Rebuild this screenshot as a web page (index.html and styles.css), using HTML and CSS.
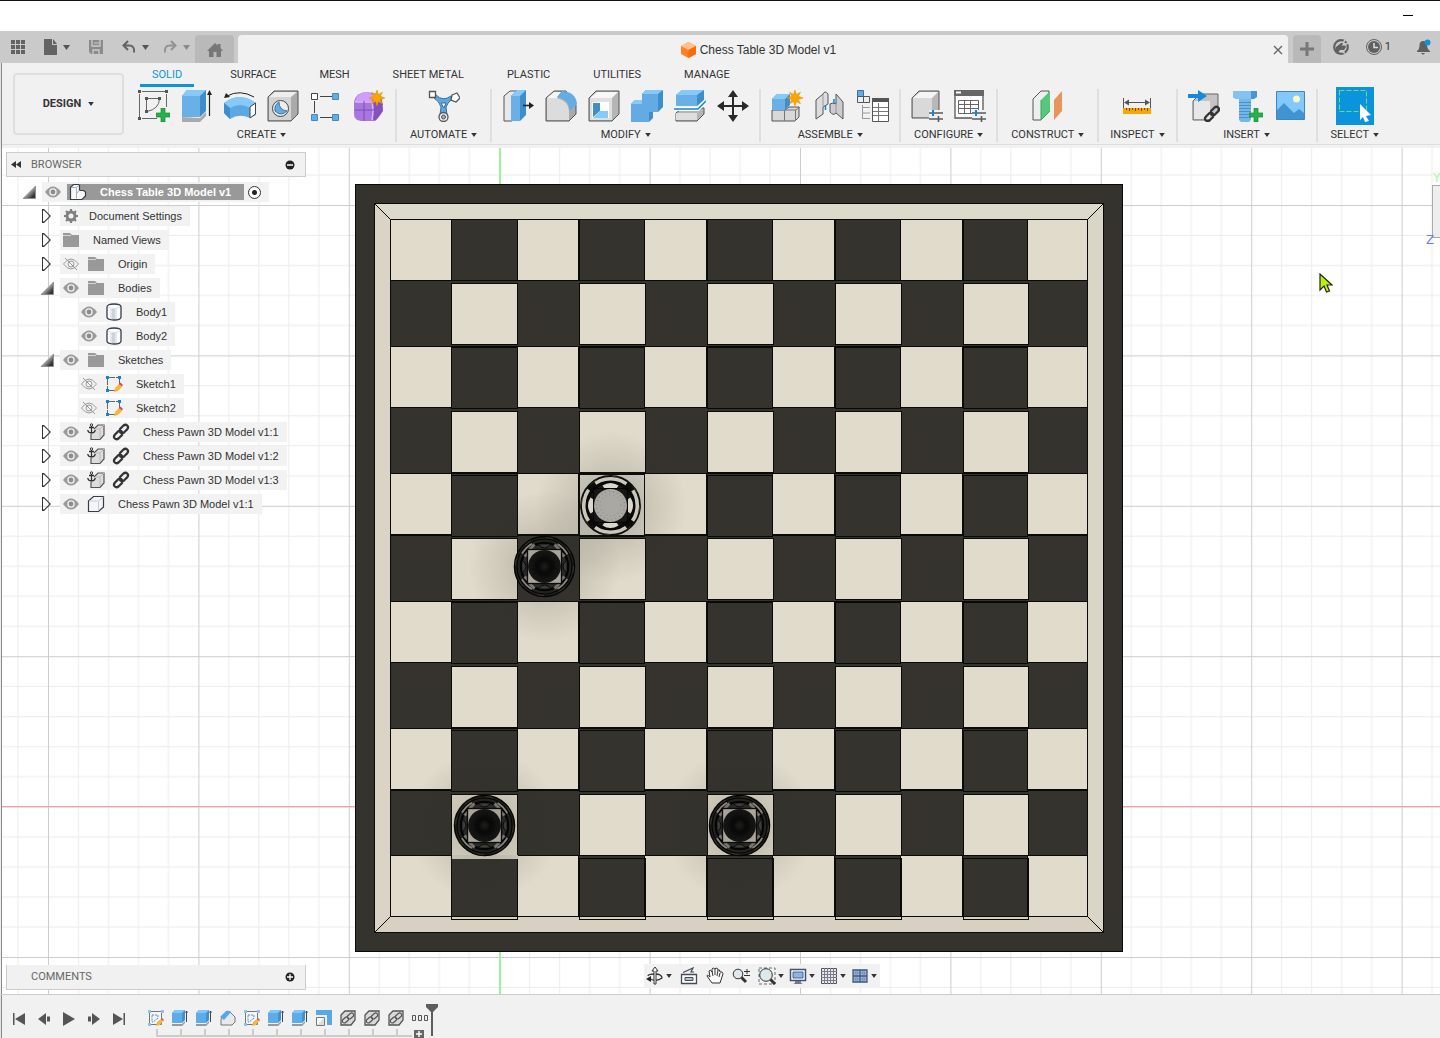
FILE: index.html
```html
<!DOCTYPE html>
<html lang="en">
<head>
<meta charset="utf-8">
<title>Chess Table 3D Model v1</title>
<link rel="stylesheet" href="styles.css">
</head>
<body>
<svg class="defs" aria-hidden="true">
  <defs>
    <symbol id="caret" viewBox="0 0 7 5"><path d="M0 0h7L3.500 5z" fill="currentColor"/></symbol>
    <symbol id="plus" viewBox="0 0 14 14"><path d="M5 0h4v5h5v4H9v5H5V9H0V5h5z" fill="#27b04b" stroke="#118d35" stroke-width=".7"/></symbol>
    <symbol id="star" viewBox="0 0 16 16"><path d="M8 0l1.500 4.500 4-2.300-2.200 4L16 8l-4.700 1.600 2.200 4.200-4-2.200L8 16l-1.500-4.400-4 2.200 2.200-4.200L0 8l4.700-1.800-2.200-4 4 2.300z" fill="#f9a602" stroke="#df8b00" stroke-width=".5"/></symbol>
    <symbol id="chain" viewBox="0 0 18 18"><g fill="none" stroke="currentColor" stroke-width="2.300" stroke-linecap="round"><path d="M8 6l3.500-3.500q2-1.500 3.700 0t0 3.700L12 9.500q-2 1.500-3.700 0"/><path d="M10 12l-3.500 3.500q-2 1.500-3.700 0t0-3.700L6 8.500q2-1.500 3.700 0"/></g></symbol>
    <symbol id="sliders" viewBox="0 0 14 12"><g stroke="#5b5b5b" stroke-width="1.600"><path d="M0 3h14M0 9h14M9.500 6v6"/></g><path d="M4 0v6" stroke="#0b87dc" stroke-width="2"/></symbol>
    <symbol id="eye" viewBox="0 0 16 12"><path d="M0 6q8-11 16 0-8 11-16 0z" fill="#9a9a9a"/><circle cx="8" cy="6" r="3.700" fill="#f2f2f2"/><circle cx="8" cy="6" r="2.400" fill="#8c8c8c"/></symbol>
    <symbol id="eye-off" viewBox="0 0 16 12"><g fill="none" stroke="#9a9a9a"><path d="M.5 6q7.500-10 15 0-7.500 10-15 0z"/><circle cx="8" cy="6" r="3"/><path d="M2 0l12 12"/></g></symbol>
    <symbol id="folder" viewBox="0 0 18 14"><path d="M1 0h7l2 2h7v12H1z" fill="#999"/><path d="M1 2.500h8" stroke="#d5d5d5"/></symbol>
    <symbol id="gear" viewBox="0 0 18 16"><circle cx="9" cy="8" r="4" fill="none" stroke="#808080" stroke-width="3"/><path d="M9 1v14M2 8h14M4 3l10 10M14 3L4 13" stroke="#808080" stroke-width="2.200"/><circle cx="9" cy="8" r="2.500" fill="#f2f2f2"/></symbol>
    <symbol id="cylinder" viewBox="0 0 18 18"><path d="M2 4q0-3 7-3t7 3v10q0 3-7 3t-7-3z" fill="#fff" stroke="#343d4c" stroke-width="1.300"/><path d="M5 6h7v10H5z" fill="#e3e7ec"/><path d="M7 6h3v10H7z" fill="#ccd3dc"/><path d="M3 4.500q6 2 12 0" fill="none" stroke="#d9dde3"/></symbol>
    <symbol id="sketch" viewBox="0 0 18 18"><path d="M3 2.500h11M2.500 3v12M14.500 3v7M3 15.500h7" fill="none" stroke="#666" stroke-dasharray="7 1"/><path d="M1 1h3v3H1zM13 1h3v3h-3zM1 14h3v3H1z" fill="#0b87dc"/><path d="M9 17l1-4 4-4 3 3-4 4z" fill="#f6b83c"/><path d="M14 9l1.500-1.500 2.500 2.500-1.300 1.500z" fill="#e94442"/></symbol>
    <symbol id="part" viewBox="0 0 18 18"><path d="M1.500 6l5-4.500h10V12l-5 4.500h-10z" fill="#f4f5f7" stroke="#343d4c" stroke-width="1.200"/><path d="M2 6h9.500v10M11.500 6l5-4" fill="none" stroke="#c8ccd2"/></symbol>
    <symbol id="anchored" viewBox="0 0 18 18"><path d="M7 6l4-4h6v10l-4 4.500H4V11" fill="#ddd" stroke="#555" stroke-width="1.200"/><path d="M8 6h5v9M13 6l4-4" fill="none" stroke="#bbb"/><path d="M4.500 3v7M2 4.500h5M.7 7q.5 3 3.800 3t3.800-3" fill="none" stroke="#333" stroke-width="1.300"/><circle cx="4.500" cy="2" r="1.200" fill="none" stroke="#333"/></symbol>
    <symbol id="assembly" viewBox="0 0 18 18"><path d="M1.500 4.500l3-3h6v6h4l2 1.500v4l-3.500 3.500H1.500z" fill="#f8f8f9" stroke="#343d4c" stroke-width="1.200"/><path d="M7.500 4.500v11M2 4.500h5.500l3-3M7.500 10.500l3-3" fill="none" stroke="#aab0ba"/></symbol>

    <symbol id="tl-sketch" viewBox="0 0 16 16"><path d="M1.500 1.500h12v13h-12z" fill="#f6f6f6" stroke="#777"/><path d="M4 5h6v3l-5 4H4z" fill="none" stroke="#3c94dc" stroke-dasharray="2 1"/><path d="M0 0h3v3H0zM13 0h3v3h-3zM0 13h3v3H0z" fill="#8fc3ee"/><path d="M8 16l1-4 4-3 2 2-3 4z" fill="#f6b83c"/><path d="M13 9l1-1 2 2-1 1z" fill="#e94442"/></symbol>
    <symbol id="tl-extrude" viewBox="0 0 16 16"><path d="M0 3l3-3h10v10l-3 3H0z" fill="#3f93d4"/><path d="M0 3h10v10H0z" fill="#5cabea"/><path d="M0 3l3-3h10l-3 3z" fill="#82c5f7"/><path d="M0 14h10l3-3v2l-3 3H0z" fill="#999"/><path d="M14.500 1v11M13.500 2.500l1-1.500 1 1.500" stroke="#444" fill="none"/></symbol>
    <symbol id="tl-fillet" viewBox="0 0 16 16"><path d="M1 9l8-8 6 6v5l-3 3H1z" fill="#e9e9e9" stroke="#777"/><path d="M0 7l6-6q4-1 5 1l-7 8z" fill="#56a9e8"/></symbol>
    <symbol id="tl-move" viewBox="0 0 16 16"><path d="M0 0h16v15h-5V5H0z" fill="#56a9e8"/><path d="M.5 7.500h8v8h-8z" fill="#fff" stroke="#777"/><path d="M1 15L8 8v7z" fill="#ddd"/></symbol>
    <symbol id="tl-link" viewBox="0 0 16 16"><path d="M1 5l4-4h10v9l-4 5H1z" fill="#d9d9d9" stroke="#555" stroke-width="1.300"/><g fill="none" stroke="#555" stroke-width="1.200"><rect x="2" y="8" width="7" height="4" rx="2" transform="rotate(-42 5.500 10)"/><rect x="7" y="4" width="7" height="4" rx="2" transform="rotate(-42 10.500 6)"/></g></symbol>

    <pattern id="grid" x="48" y="57" width="150.400" height="150.400" patternUnits="userSpaceOnUse">
      <path d="M30.500 0v151M60.500 0v151M90.500 0v151M120.500 0v151M0 30.500h151M0 60.500h151M0 90.500h151M0 120.500h151" stroke="#ececec"/>
      <path d="M.5 0v151M0 .5h151" stroke="#cdcdcd"/>
    </pattern>
    <radialGradient id="shade"><stop offset=".35" stop-color="#23271b" stop-opacity=".15"/><stop offset="1" stop-color="#23271b" stop-opacity="0"/></radialGradient>
    <radialGradient id="head"><stop offset="0" stop-color="#1e1e1c"/><stop offset=".4" stop-color="#080808"/><stop offset="1" stop-color="#171716"/></radialGradient>

    <g id="pawn-dark">
      <circle r="30" fill="#22221f" stroke="#050505" stroke-width="1.500"/>
      <circle r="29" fill="none" stroke="#5c4c26" stroke-width=".6" stroke-dasharray="7 16"/>
      <circle r="26" fill="none" stroke="#85837c" stroke-width="2.400" stroke-dasharray="14 26.840" stroke-dashoffset="-13"/>
      <circle r="27.500" fill="none" stroke="#050505" stroke-width="1.200"/>
      <circle r="23.500" fill="#292a27" stroke="#050505" stroke-width="2.500"/>
      <path d="M-15-17l5-5M15-17l-5-5M-15 17l5 5M15 17l-5 5M-20-10l5-5M20-10l-5-5M-20 10l5 5M20 10l-5 5" stroke="#77756e" stroke-width="3"/>
      <path d="M-6-22Q0-15 6-22M-6 22Q0 15 6 22M-22-6Q-15 0-22 6M22-6Q15 0 22 6" fill="#3c3d39" stroke="#080808"/>
      <rect x="-17" y="-17" width="34" height="34" fill="#aaa49b" stroke="#0b0b0a" stroke-width="1.300"/>
      <circle r="16.500" fill="url(#head)"/><circle r="12" fill="none" stroke="#1b1b19" stroke-width="1.500" stroke-dasharray="1 3"/>
    </g>
    <g id="pawn-light">
      <circle r="29.500" fill="#c9c7bc" stroke="#0c0c0a" stroke-width="1.800"/><circle r="29" fill="none" stroke="#665326" stroke-width=".7" stroke-dasharray="7 16"/>
      <circle r="26.500" fill="none" stroke="#0c0c0a" stroke-width="5" stroke-dasharray="9 32.600" stroke-dashoffset="-16"/>
      <circle r="23.500" fill="#171714" stroke="#080808" stroke-width="3"/>
      <path d="M-8-20Q0-25 8-20L6-17Q0-18-6-17zM-8 20Q0 25 8 20L6 17Q0 18-6 17zM-20-8Q-25 0-20 8L-17 6Q-18 0-17-6zM20-8Q25 0 20 8L17 6Q18 0 17-6z" fill="#dad8cd"/>
      <rect x="-17" y="-17" width="34" height="34" fill="none" stroke="#050505"/>
      <circle r="16.500" fill="#aaa8a3"/><circle r="14" fill="none" stroke="#8f8d88" stroke-width="1.500" stroke-dasharray="1 3"/><circle r="10.500" fill="none" stroke="#94928e" stroke-width="1.200" stroke-dasharray="1 3"/>
    </g>
    <path id="light-a" d="M390 0h61v61h-61zM517 0h61v61h-61zM644 0h62v61h-62zM772 0h62v61h-62zM900 0h62v61h-62zM1027 0h60v61h-60z" fill="#e1dbcb"/>
    <path id="cells-b" d="M451 0h66v61h-66zM579 0h66v61h-66zM707 0h66v61h-66zM835 0h66v61h-66zM963 0h65v61h-65z"/>
    <path id="cells-c" d="M451 0h66v61h-66zM579 0h65v61h-65zM707 0h65v61h-65zM835 0h65v61h-65zM963 0h64v61h-64z"/>
  </defs>
</svg>

<div class="app">
  <header>
    <div class="titlebar"><button class="minimize" aria-label="Minimize"></button></div>
    <div class="appbar">
      <div class="quick">
        <button aria-label="Data panel"><svg width="14" height="14" fill="#636363"><path d="M0 0h4v4H0zM5 0h4v4H5zM10 0h4v4h-4zM0 5h4v4H0zM5 5h4v4H5zM10 5h4v4h-4zM0 10h4v4H0zM5 10h4v4H5zM10 10h4v4h-4z"/></svg></button>
        <button aria-label="File"><svg width="13" height="16" fill="#636363"><path d="M0 0h8v6h5v10H0z"/><path d="M9 0l4 5H9z"/></svg><svg class="caret"><use href="#caret"/></svg></button>
        <button aria-label="Save"><svg width="14" height="14"><path d="M0 0h14v14H2l-2-2z" fill="#8b8b8b"/><path d="M3 0v6h8V0M4 14v-4h6v4" fill="none" stroke="#ccc" stroke-width="1.300"/><path d="M5 3h5" stroke="#ccc"/></svg></button>
        <button aria-label="Undo"><svg width="14" height="14" fill="none" stroke="#636363" stroke-width="2"><path d="M6 1L1.500 5.500 6 10M2 5.500h5q6 0 5 7"/></svg><svg class="caret"><use href="#caret"/></svg></button>
        <button class="dim" aria-label="Redo"><svg width="14" height="14" fill="none" stroke="#929292" stroke-width="2"><path d="M8 1l4.500 4.500L8 10M12 5.500H7q-6 0-5 7"/></svg><svg class="caret"><use href="#caret"/></svg></button>
      </div>
      <button class="home" aria-label="Home"><svg width="16" height="14" fill="#777"><path d="M8 0l2.500 2.500V1h3v4L16 8h-2v6H9.500V9h-3v5H2V8H0z"/></svg></button>
      <div class="doc-tab">
        <svg width="15" height="16"><path d="M0 4l7.500-4L15 4v8l-7.500 4L0 12z" fill="#ff8124"/><path d="M0 4l7.500-4L15 4 7.500 8z" fill="#ffc28f"/><path d="M7.500 8L15 4v8l-7.500 4z" fill="#fb6a07"/></svg>
        <span>Chess Table 3D Model v1</span>
        <button class="close" aria-label="Close"><svg width="10" height="10" stroke="#666" stroke-width="1.400"><path d="M1 1l8 8M9 1L1 9"/></svg></button>
      </div>
      <button class="new-tab" aria-label="New tab"><svg width="14" height="14" stroke="#777" stroke-width="3"><path d="M7 0v14M0 7h14"/></svg></button>
      <div class="status">
        <button aria-label="Extensions"><svg width="16" height="16"><circle cx="8" cy="8" r="6.800" fill="none" stroke="#606060" stroke-width="2.200"/><path d="M2 13l1-5 5-4 2 0-1 3 3-1 1 2-2 3-4 0-3 4z" fill="#606060"/><path d="M12 1l-2 3M15 4l-4 2M8 11q2 3 4 3" stroke="#cacaca" stroke-width="1.400" fill="none"/></svg></button>
        <button class="jobs"><svg width="16" height="16"><circle cx="8" cy="8" r="7.500" fill="none" stroke="#606060"/><circle cx="8" cy="8" r="6" fill="#606060"/><path d="M8 4v4.500h4" fill="none" stroke="#ddd" stroke-width="1.500"/></svg>1</button>
        <button aria-label="Notifications"><svg width="15" height="16"><path d="M1 12q3-2 2.500-6.500Q4 2 7 2q4 0 4 4 0 4 3 6v1H1zM5 14h4q-2 3-4 0z" fill="#606060"/><circle cx="11.500" cy="3.500" r="3" fill="#0b93dc"/></svg></button>
      </div>
    </div>

    <div class="ribbon">
      <button class="workspace">DESIGN<svg class="caret small"><use href="#caret"/></svg></button>
      <div class="ribbon-main">
        <nav class="tabs">
          <a href="#solid" class="active">SOLID</a><a href="#surface">SURFACE</a><a href="#mesh">MESH</a><a href="#sheet">SHEET METAL</a><a href="#plastic">PLASTIC</a><a href="#utilities">UTILITIES</a><a href="#manage">MANAGE</a>
        </nav>
        <div class="tools">
          <section class="group">
            <div class="icons">
              <button aria-label="Create sketch"><svg width="32" height="32"><path d="M4 1.500h23M1.500 4v23M4 28.500h15M28.500 4v13M9 8.500h12M8.500 9v12" stroke="#666" fill="none"/><path d="M21.500 9Q21 19 9 21.500" stroke="#666" fill="none"/><path d="M0 0h3v3H0zM27 0h3v3h-3zM0 27h3v3H0zM7 7h3v3H7zM20 7h3v3h-3zM7 20h3v3H7z" fill="#555"/><use href="#plus" x="18" y="18" width="14" height="14"/></svg></button>
              <button aria-label="Extrude"><svg width="32" height="32"><path d="M1 27l18 1 6-6v4l-6 6H1z" fill="#aaa"/><path d="M1 6l5-6h19v21l-6 6H1z" fill="#3d8ecb"/><path d="M1 6h18v21H1z" fill="#69b0e6"/><path d="M1 6l5-6h19l-6 6z" fill="#86c9fb"/><path d="M28.500 3v23" stroke="#222" stroke-width="1.200"/><path d="M26 5l2.500-5L31 5z" fill="#222"/></svg></button>
              <button aria-label="Revolve"><svg width="32" height="32"><path d="M0 13q15-12 32 0v12l-6 3q-11-5-20 1l-6-6z" fill="#5ba8e3"/><path d="M0 13Q16 1 32 13l-6 5q-10-6-20 0z" fill="#86c9fb"/><path d="M0 13l6 5v11l-6-6z" fill="#3d8ecb"/><path d="M26 17l5.500-4v11L26 28z" fill="#fff" stroke="#444"/><path d="M3 6Q16-1 30 7" fill="none" stroke="#222"/><path d="M0 8l2-5 4 4z" fill="#222"/></svg></button>
              <button aria-label="Hole"><svg width="32" height="32"><path d="M1 7l6-6h24v23l-7 7H1z" fill="#aaa" stroke="#555"/><path d="M2 7h22v23H2z" fill="#d4d4d4"/><path d="M2 7l6-5h22l-6 5z" fill="#eee"/><circle cx="13.500" cy="18.500" r="8" fill="#eee" stroke="#444"/><path d="M12 12q-5 3-4 9 6 6 12 0-8-1-8-9z" fill="#65abe2" stroke="#3b77a7"/></svg></button>
              <button aria-label="Pattern"><svg width="32" height="32"><path d="M10 6.500h12M4.500 11v12M10 27.500h12" stroke="#444"/><path d="M1.500 3.500h6v6h-6z" fill="#fff" stroke="#444"/><path d="M22.500 3.500h6v6h-6zM1.500 24.500h6v6h-6zM22.500 24.500h6v6h-6z" fill="#63ade5" stroke="#4788ba"/></svg></button>
              <button aria-label="Create form"><svg width="32" height="32"><path d="M1 12Q3 2 14 2l10 2q6 4 6 14 0 6-8 13H8q-7-1-7-7z" fill="#a876df"/><path d="M2 11Q5 2 14 2l9 4-5 5-14 1z" fill="#cf9dff"/><path d="M20 11l8-5 2 15-7 9q-1 1-3-1z" fill="#8550bf"/><path d="M2 12h17q2 8 0 18" fill="none" stroke="#d9b9f7" stroke-width="1.500"/><path d="M11 11v20M2 20h18l10-6" fill="none" stroke="#7d4db5"/><use href="#star" x="16" y="0" width="16" height="16"/></svg></button>
            </div>
            <button class="menu">CREATE<svg class="caret small"><use href="#caret"/></svg></button>
          </section>
          <section class="group single">
            <div class="icons"><button aria-label="Automate"><svg width="32" height="32"><path d="M5 7q7 5 8 10l-1 8h7l-1-8q2-6 7-8l-2-3q-8 6-15-1z" fill="#5fa8e2" stroke="#356f9d"/><path d="M13 13h5l-2 5z" fill="#fff" stroke="#356f9d"/><path d="M1.500 1.500h6v6h-6z" fill="#fff" stroke="#555" stroke-width="1.300"/><path d="M24 5l5-2 3 5-4 4-5-2z" fill="#fff" stroke="#555" stroke-width="1.300"/><circle cx="15.500" cy="27" r="4.500" fill="#eee" stroke="#555" stroke-width="1.300"/><circle cx="15.500" cy="27" r="2" fill="#aaa" stroke="#555"/></svg></button></div>
            <button class="menu">AUTOMATE<svg class="caret small"><use href="#caret"/></svg></button>
          </section>
          <section class="group">
            <div class="icons">
              <button aria-label="Press pull"><svg width="32" height="32"><path d="M2 6l6-5h10v23l-8 7H2z" fill="#e8e8e8" stroke="#555"/><path d="M9 6l6-6h9v25l-6 6H9z" fill="#3d8ecb"/><path d="M9 6h9v25H9z" fill="#69b0e6"/><path d="M9 6l6-6h9l-6 6z" fill="#86c9fb"/><path d="M21 15.500h7" stroke="#222" stroke-width="1.600"/><path d="M27 12l5 3.500-5 3.500z" fill="#222"/></svg></button>
              <button aria-label="Fillet"><svg width="32" height="32"><path d="M1 8l8-7h12l10 14v9l-7 7H1z" fill="#aaa" stroke="#555"/><path d="M2 8h10q12 3 12 13v9H2z" fill="#dcdcdc"/><path d="M2 8l7-6h7l-4 6z" fill="#f7f7f7"/><path d="M12 7l5-6q14 1 15 13l-7 7Q24 9 12 7z" fill="#63ade5"/></svg></button>
              <button aria-label="Shell"><svg width="32" height="32"><path d="M1 8l7-7h23v23l-7 7H1z" fill="#b5b5b5" stroke="#555"/><path d="M2 8h22v22H2z" fill="#e0e0e0"/><path d="M2 8l7-6h21l-6 6z" fill="#f7f7f7"/><path d="M4 12h17v16H4z" fill="#fff"/><path d="M5 13h7v8l-7 6z" fill="#3d8ecb"/><path d="M12 21h8v7H5z" fill="#86c9fb"/></svg></button>
              <button aria-label="Combine"><svg width="32" height="32"><path d="M0 14l4-4h7V4l4-4h17v17l-5 5h-5v6l-4 4H0z" fill="#3d8ecb"/><path d="M0 14h11V4h16v18h-9v10H0z" fill="#64abe3"/><path d="M0 14l4-4h7v4zM11 4l4-4h17l-5 4z" fill="#86c9fb"/></svg></button>
              <button aria-label="Split"><svg width="32" height="32"><path d="M2 23l7-5h21v6l-7 7H2z" fill="#b5b5b5" stroke="#555"/><path d="M2 23h21v7H2z" fill="#dedede"/><path d="M2 5l6-5h22v10l-7 6H2z" fill="#3d8ecb"/><path d="M2 5h21v11H2z" fill="#69b0e6"/><path d="M2 5l6-5h22l-7 5z" fill="#86c9fb"/><path d="M0 19h24l8-8" fill="none" stroke="#fff" stroke-width="4"/><path d="M0 19h24l8-8" fill="none" stroke="#0787dc" stroke-width="1.500"/></svg></button>
              <button aria-label="Move"><svg width="32" height="32"><path d="M16 3v26M3 16h26" stroke="#292929" stroke-width="2"/><path d="M11 7l5-7 5 7zM11 25l5 7 5-7zM7 11l-7 5 7 5zM25 11l7 5-7 5z" fill="#292929"/></svg></button>
            </div>
            <button class="menu">MODIFY<svg class="caret small"><use href="#caret"/></svg></button>
          </section>
          <section class="group">
            <div class="icons">
              <button aria-label="New component"><svg width="32" height="32"><path d="M1 20h13l4-3h10v10l-4 4H1z" fill="#d8d8d8" stroke="#555"/><path d="M13.500 20v11M24.500 20v11M14 20h11l4-3" fill="none" stroke="#777"/><path d="M1 9l5-5h13v11l-5 5H1z" fill="#3d8ecb"/><path d="M1 9h13v11H1z" fill="#69b0e6"/><path d="M1 9l5-5h13l-5 5z" fill="#86c9fb"/><use href="#star" x="16" y="0" width="16" height="16"/></svg></button>
              <button aria-label="Joint"><svg width="32" height="32"><path d="M2 10l7-6q2-4 5 0v10l-5 3v7l-7 5z" fill="#ddd" stroke="#555"/><path d="M9 4v12" stroke="#999"/><path d="M22 4l7 8v17l-7-6q-3 3-6-1V14q3-2 6 0z" fill="#ccc" stroke="#555"/><path d="M22 14v9" stroke="#999"/><path d="M11.500 15v5M20 9v5" stroke="#0787dc" stroke-width="1.500"/></svg></button>
              <button aria-label="Parts list"><svg width="32" height="32"><path d="M.5.500h6v6h-6z" fill="#63ade5" stroke="#38739f"/><path d="M.5 6.500h6v6h-6zM6.500 6.500h6v6h-6z" fill="#eee" stroke="#555"/><path d="M5.500 15v14M5 17.500h8M5 23h8M5 28.500h8" stroke="#999"/><path d="M15.500 8.500h16v23h-16z" fill="#fff" stroke="#555"/><path d="M15 8h17v4H15z" fill="#555"/><path d="M16 17.500h15M16 21.500h15M16 25.500h15M21.500 13v18" stroke="#777"/></svg></button>
            </div>
            <button class="menu">ASSEMBLE<svg class="caret small"><use href="#caret"/></svg></button>
          </section>
          <section class="group">
            <div class="icons">
              <button aria-label="Configure"><svg width="32" height="32"><path d="M1 8l7-7h20v19l-8 8H1z" fill="#b8b8b8" stroke="#555"/><path d="M2 8h19v19H2z" fill="#d9d9d9"/><path d="M2 8l7-6h18l-6 6z" fill="#f5f5f5"/><path d="M18 20h14v12H18z" fill="#f1f1f1"/><use href="#sliders" x="18" y="20" width="14" height="12"/></svg></button>
              <button aria-label="Configuration table"><svg width="32" height="32"><path d="M1 1h28v27H1z" fill="#fff" stroke="#555" stroke-width="1.300"/><path d="M0 0h30v6H0z" fill="#666"/><path d="M2 2.500h5" stroke="#fff" stroke-width="2"/><path d="M4.500 10.500h20v13h-20zM4 14.500h21M4 18.500h21M10.500 10v13M16.500 10v13" fill="none" stroke="#666"/><path d="M18 20h14v12H18z" fill="#f1f1f1"/><use href="#sliders" x="18" y="20" width="14" height="12"/></svg></button>
            </div>
            <button class="menu">CONFIGURE<svg class="caret small"><use href="#caret"/></svg></button>
          </section>
          <section class="group single">
            <div class="icons"><button aria-label="Construct plane"><svg width="32" height="32"><path d="M1 9l8-8h8v21l-8 8H1z" fill="#eee" stroke="#555"/><path d="M9 10l9-9v20l-9 9z" fill="#56c77b"/><path d="M22 10l8-9v20l-8 9z" fill="#e8945b"/><path d="M9 10v20l9-9" fill="none" stroke="#39a75e"/></svg></button></div>
            <button class="menu">CONSTRUCT<svg class="caret small"><use href="#caret"/></svg></button>
          </section>
          <section class="group narrow">
            <div class="icons"><button aria-label="Measure"><svg width="32" height="32"><path d="M2.500 8v10M29.500 8v10M4 12.500h24" stroke="#555"/><path d="M3 12.500l5-3v6zM29 12.500l-5-3v6z" fill="#555"/><path d="M2 18h28v6H2z" fill="#f8a602"/><path d="M5.500 18v2M8.500 18v3M11.500 18v2M14.500 18v3M17.500 18v2M20.500 18v3M23.500 18v2M26.500 18v3" stroke="#6b4d10"/></svg></button></div>
            <button class="menu">INSPECT<svg class="caret small"><use href="#caret"/></svg></button>
          </section>
          <section class="group">
            <div class="icons">
              <button aria-label="Insert derive"><svg width="32" height="32"><path d="M5 11l7-7h18v18l-7 8H5z" fill="#c4c4c4" stroke="#666"/><path d="M6 11h16v18H6z" fill="#e7e7e7"/><path d="M0 4h10V0l9 6-9 6V8H0z" fill="#1589df"/><path d="M20 32l12-12v12z" fill="#f1f1f1"/><use href="#chain" x="15" y="15" width="18" height="18" color="#333"/></svg></button>
              <button aria-label="Insert fastener"><svg width="32" height="32"><path d="M8 8h12v22l-2 2h-8l-2-2z" fill="#74b7e9"/><path d="M8 12.500h12M8 15.500h12M8 18.500h12M8 21.500h12M8 24.500h12M8 27.500h12" stroke="#4e90c3"/><path d="M2 1h24v6l-3 2H5L2 7z" fill="#4796d3"/><path d="M2 1h18v8H5L2 7z" fill="#82c2f4"/><use href="#plus" x="18" y="18" width="14" height="14"/></svg></button>
              <button aria-label="Canvas"><svg width="32" height="32"><path d="M2.500 1.500h28v28h-28z" fill="#83c8fb" stroke="#3f86bd"/><circle cx="22.500" cy="9" r="3.500" fill="#fff5bf"/><path d="M3 20l7-7 10 10 5-4 5 4v6H3z" fill="#4194d2"/></svg></button>
            </div>
            <button class="menu">INSERT<svg class="caret small"><use href="#caret"/></svg></button>
          </section>
          <section class="group single last">
            <div class="icons"><button class="select-tool" aria-label="Select"><svg width="38" height="38"><path d="M3.500 3.500h27v21h-27z" fill="none" stroke="#67dd82" stroke-dasharray="5 2"/><path d="M24 17l11 11-5 1 3 5-4 1-2-5-3 3z" fill="#fff"/></svg></button></div>
            <button class="menu">SELECT<svg class="caret small"><use href="#caret"/></svg></button>
          </section>
        </div>
      </div>
    </div>
  </header>

  <main class="viewport">
    <svg class="scene">
      <rect width="100%" height="100%" fill="#fff"/>
      <rect width="100%" height="100%" fill="url(#grid)"/>
      <path d="M0 658.500h3000" stroke="#ff9aa3"/>
      <path d="M500 0v2000" stroke="#9ff09f" stroke-width="2"/>
      <path d="M.5 0v2000" stroke="#eee"/><path d="M1.500 0v2000" stroke="#888"/>
      <g transform="translate(.5 -147.500)">
        <g shape-rendering="crispEdges" stroke="#090908">
          <rect x="355" y="184" width="767" height="767" fill="#35332e"/>
          <path d="M374 203h729l-16 16H390z" fill="#dcdacb"/><path d="M374 203l16 16v697l-16 16z" fill="#dbd3c5"/>
          <path d="M1103 203v729l-16-16V219z" fill="#d9d6c8"/><path d="M374 932l16-16h697l16 16z" fill="#d8d0c1"/>
          <rect x="390" y="219" width="697" height="697" fill="#35332e"/>
          <path d="M390 280h697M390 346h697M390 407h697M390 473h697M390 535h697M390 601h697M390 662h697M390 728h697M390 790h697M390 855h697"/>
          <use href="#light-a" y="219"/><use href="#light-a" y="346"/><use href="#light-a" y="473"/><use href="#light-a" y="601"/><use href="#light-a" y="728"/><use href="#light-a" y="855"/>
          <g fill="#35332e"><use href="#cells-c" y="219"/><use href="#cells-c" y="347"/><use href="#cells-c" y="475"/><use href="#cells-c" y="602"/><use href="#cells-c" y="730"/></g>
          <g fill="#d8d0c1"><use href="#cells-b" y="858"/></g>
          <path d="M451 858h66v58h-66zM579 858h65v58h-65zM707 858h65v58h-65zM835 858h65v58h-65zM963 858h64v58h-64z" fill="#35332e"/>
          <g fill="#e1dbcb"><use href="#cells-b" y="283"/><use href="#cells-b" y="411"/><use href="#cells-b" y="538"/><use href="#cells-b" y="666"/><use href="#cells-b" y="794"/></g>
          <path d="M579 474h65v61h-65z" fill="#d9d6ca"/>
          <path d="M451 854h66v4h-66z" fill="#d5d0c2" stroke="none"/>
        </g>
        <g fill="url(#shade)"><circle cx="611" cy="506" r="76"/><circle cx="544" cy="566" r="76"/><circle cx="484" cy="825" r="76"/><circle cx="739" cy="825" r="76"/></g>
        <use href="#pawn-light" x="610" y="505"/><use href="#pawn-dark" x="544" y="566"/><use href="#pawn-dark" x="484" y="825"/><use href="#pawn-dark" x="739" y="825"/>
      </g>
    </svg>

    <aside class="browser">
      <div class="panel-head"><button aria-label="Collapse"><svg width="10" height="7" fill="#333"><path d="M5 0v7L0 3.500zM10 0v7L5 3.500z"/></svg></button><span>BROWSER</span><button aria-label="Minimize browser"><svg width="10" height="10"><circle cx="5" cy="5" r="4.500" fill="#222"/><path d="M2 5h6" stroke="#fff" stroke-width="1.500"/></svg></button></div>
      <ul class="tree">
        <li class="l0"><button class="twisty open" aria-label="Collapse"></button><div class="pill"><svg class="eye"><use href="#eye"/></svg><div class="root"><svg class="ico"><use href="#assembly"/></svg><span>Chess Table 3D Model v1</span></div><input type="radio" checked aria-label="Activate component"></div></li>
        <li class="l1"><button class="twisty" aria-label="Expand"></button><div class="pill bare"><svg class="ico"><use href="#gear"/></svg><span class="near">Document Settings</span></div></li>
        <li class="l1"><button class="twisty" aria-label="Expand"></button><div class="pill bare"><svg class="ico"><use href="#folder"/></svg><span>Named Views</span></div></li>
        <li class="l1"><button class="twisty" aria-label="Expand"></button><div class="pill"><svg class="eye"><use href="#eye-off"/></svg><svg class="ico"><use href="#folder"/></svg><span>Origin</span></div></li>
        <li class="l1"><button class="twisty open" aria-label="Collapse"></button><div class="pill"><svg class="eye"><use href="#eye"/></svg><svg class="ico"><use href="#folder"/></svg><span>Bodies</span></div></li>
        <li class="l2"><div class="pill"><svg class="eye"><use href="#eye"/></svg><svg class="ico"><use href="#cylinder"/></svg><span>Body1</span></div></li>
        <li class="l2"><div class="pill"><svg class="eye"><use href="#eye"/></svg><svg class="ico"><use href="#cylinder"/></svg><span>Body2</span></div></li>
        <li class="l1"><button class="twisty open" aria-label="Collapse"></button><div class="pill"><svg class="eye"><use href="#eye"/></svg><svg class="ico"><use href="#folder"/></svg><span>Sketches</span></div></li>
        <li class="l2"><div class="pill"><svg class="eye"><use href="#eye-off"/></svg><svg class="ico"><use href="#sketch"/></svg><span>Sketch1</span></div></li>
        <li class="l2"><div class="pill"><svg class="eye"><use href="#eye-off"/></svg><svg class="ico"><use href="#sketch"/></svg><span>Sketch2</span></div></li>
        <li class="l1"><button class="twisty" aria-label="Expand"></button><div class="pill"><svg class="eye"><use href="#eye"/></svg><svg class="ico"><use href="#anchored"/></svg><svg class="ico link"><use href="#chain"/></svg><span>Chess Pawn 3D Model v1:1</span></div></li>
        <li class="l1"><button class="twisty" aria-label="Expand"></button><div class="pill"><svg class="eye"><use href="#eye"/></svg><svg class="ico"><use href="#anchored"/></svg><svg class="ico link"><use href="#chain"/></svg><span>Chess Pawn 3D Model v1:2</span></div></li>
        <li class="l1"><button class="twisty" aria-label="Expand"></button><div class="pill"><svg class="eye"><use href="#eye"/></svg><svg class="ico"><use href="#anchored"/></svg><svg class="ico link"><use href="#chain"/></svg><span>Chess Pawn 3D Model v1:3</span></div></li>
        <li class="l1"><button class="twisty" aria-label="Expand"></button><div class="pill"><svg class="eye"><use href="#eye"/></svg><svg class="ico"><use href="#part"/></svg><span>Chess Pawn 3D Model v1:1</span></div></li>
      </ul>
    </aside>

    <div class="panel-head comments"><span>COMMENTS</span><button aria-label="Expand comments"><svg width="10" height="10"><circle cx="5" cy="5" r="4.500" fill="#222"/><path d="M2 5h6M5 2v6" stroke="#fff" stroke-width="1.300"/></svg></button></div>

    <div class="navbar">
      <div class="nav-set">
        <button aria-label="Orbit"><svg width="18" height="18"><path d="M4 12q7 3 12-1 0-4-7-4T2 9" fill="none" stroke="#333" stroke-width="1.300"/><path d="M0 12l5-3v6z" fill="#222"/><path d="M8 17V4H6l3-4 3 4h-2v13z" fill="#fff" stroke="#333"/></svg><svg class="caret small"><use href="#caret"/></svg></button>
        <button aria-label="Look at"><svg width="18" height="18"><path d="M1.500 7.500h15v9h-15z" fill="#fff" stroke="#444b57" stroke-width="1.300"/><path d="M5 10.500h8v3H5z" fill="#b6c0d2" stroke="#444b57"/><path d="M3 5.500L13 1l-2 4h3" fill="none" stroke="#444b57" stroke-width="1.200"/></svg></button>
        <button aria-label="Pan"><svg width="18" height="18"><path d="M6 16l-5-7q0-2 3 1L3 4q1-2 3 1V2q1-2 3 0l1-1q2 0 2 2 2-1 2 2l2 0q2 1 0 5l-2 6z" fill="#f9f9f9" stroke="#333"/><path d="M6 4l1 5M9 2v6M12 3l-1 6M14 6l-1 4" stroke="#333"/></svg></button>
        <button aria-label="Zoom"><svg width="18" height="18"><path d="M9 10l5 5" stroke="#333" stroke-width="3"/><circle cx="6" cy="7" r="4.800" fill="#dce9eb" stroke="#333"/><path d="M12 4.500h6M15 2v5M12 8.500h6" stroke="#333"/></svg></button>
        <button aria-label="Fit"><svg width="18" height="18"><path d="M1 1h16v16H1z" fill="none" stroke="#666" stroke-dasharray="3 2"/><path d="M12 12l5 5" stroke="#333" stroke-width="3"/><circle cx="8" cy="8" r="6.300" fill="#dce9eb" stroke="#333"/></svg><svg class="caret small"><use href="#caret"/></svg></button>
      </div>
      <div class="nav-set tight">
        <button aria-label="Display settings"><svg width="18" height="18"><path d="M1.500 2.500h15v11h-15z" fill="#fff" stroke="#46536c" stroke-width="1.500"/><path d="M4 5h10v6H4z" fill="#8eb4e3" stroke="#416497"/><path d="M6 14h6v2l2 1H4l2-1z" fill="#778"/></svg><svg class="caret small"><use href="#caret"/></svg></button>
        <button aria-label="Grid settings"><svg width="18" height="18"><path d="M1.500 1.500h15v15h-15z" fill="#e8e8ed" stroke="#555"/><path d="M4.500 1v16M7.500 1v16M10.500 1v16M13.500 1v16M1 4.500h16M1 7.500h16M1 10.500h16M1 13.500h16" stroke="#777c89"/></svg><svg class="caret small"><use href="#caret"/></svg></button>
        <button aria-label="Viewports"><svg width="18" height="18" fill="#a3bfe4" stroke="#3d577b" stroke-width="1.300"><path d="M2 3h7v6H2zM9 3h7v6H9zM2 9h7v6H2zM9 9h7v6H9z"/><path d="M4 5h3v2H4zM11 5h3v2h-3zM4 11h3v2H4zM11 11h3v2h-3z" stroke-width=".5"/></svg><svg class="caret small"><use href="#caret"/></svg></button>
      </div>
    </div>

    <div class="cube"><span class="axis-y">Y</span><div class="cube-face"></div><span class="axis-z">Z</span></div>
    <svg class="pointer" width="14" height="20"><path d="M1 1v16l4-4 2.500 6 3-1L8 12h5z" fill="#b9f300" stroke="#222" stroke-width="1.200"/></svg>
  </main>

  <footer class="timeline">
    <div class="playback">
      <button aria-label="Go to start"><svg width="12" height="12" fill="#555"><path d="M0 0h1.500v12H0zM12 0v12L2 6z"/></svg></button>
      <button aria-label="Step back"><svg width="12" height="12" fill="#555"><path d="M8 0v12L0 6zM9 3.500h3v5H9z"/></svg></button>
      <button aria-label="Play"><svg width="12" height="14" fill="#555"><path d="M0 0l12 7-12 7z"/></svg></button>
      <button aria-label="Step forward"><svg width="12" height="12" fill="#555"><path d="M4 0l8 6-8 6zM0 3.500h3v5H0z"/></svg></button>
      <button aria-label="Go to end"><svg width="12" height="12" fill="#555"><path d="M10.500 0H12v12h-1.500zM0 0l10 6-10 6z"/></svg></button>
    </div>
    <ol class="features">
      <li><svg><use href="#tl-sketch"/></svg></li><li><svg><use href="#tl-extrude"/></svg></li><li><svg><use href="#tl-extrude"/></svg></li><li><svg><use href="#tl-fillet"/></svg></li><li><svg><use href="#tl-sketch"/></svg></li><li><svg><use href="#tl-extrude"/></svg></li><li><svg><use href="#tl-extrude"/></svg></li><li><svg><use href="#tl-move"/></svg></li><li><svg><use href="#tl-link"/></svg></li><li><svg><use href="#tl-link"/></svg></li><li><svg><use href="#tl-link"/></svg></li>
    </ol>
    <svg class="marker" width="30" height="36"><path d="M.5 13.500h3v5h-3zM6.500 13.500h3v5h-3zM12.500 13.500h3v5h-3z" fill="none" stroke="#555"/><path d="M14 2h12v3l-5 5v24h-2V10l-5-5z" fill="#5d5d5d"/><path d="M2 28h10v8H2z" fill="#666"/><path d="M7 29v6M4 32h6" stroke="#fff" stroke-width="1.500"/></svg>
  </footer>
</div>
</body>
</html>
```
FILE: styles.css
```css
* { box-sizing: border-box; }
body { margin: 0; font: 11px/16px "Liberation Sans", Arial, sans-serif; color: #333; }
button { display: flex; align-items: center; justify-content: center; margin: 0; padding: 0; border: 0; background: none; font: inherit; color: inherit; }
svg { display: block; flex: none; }
ul, ol { list-style: none; margin: 0; padding: 0; }
.defs { position: absolute; width: 0; height: 0; }
.app { display: flex; flex-direction: column; min-height: 100vh; overflow: hidden; }

.titlebar { display: flex; justify-content: flex-end; height: 31px; padding-right: 27px; border-top: 1px solid #111; background: #fff; }
.minimize { width: 10px; height: 15px; border-bottom: 1px solid #000; }

.appbar { display: flex; height: 32px; padding-right: 9px; background: #cacaca; }
.quick { display: flex; align-items: center; gap: 19px; padding: 0 5px 0 11px; color: #555; }
.quick button { gap: 6px; }
.quick .dim { margin-left: -5px; color: #8a8a8a; }
.caret { width: 7px; height: 5px; }
.caret.small { width: 6px; height: 4px; color: #333; }
.home { width: 39px; margin: 4px 4px 0 0; padding-top: 2px; border-radius: 4px 4px 0 0; background: #b9b9b9; }
.doc-tab { display: flex; flex: 1; align-items: center; justify-content: center; gap: 4px; margin-top: 4px; padding: 2px 5px 0 0; border-radius: 4px 4px 0 0; background: #f1f1f1; font-size: 12px; }
.doc-tab span { margin-right: auto; }
.doc-tab > svg { margin-left: auto; }
.doc-tab .close { width: 10px; margin-left: -10px; }
.new-tab { width: 28px; margin: 4px 12px 0 5px; border-radius: 4px 4px 0 0; background: #b9b9b9; }
.status { display: flex; align-items: center; gap: 17px; font-family: Roboto, sans-serif; }
.status .jobs { gap: 3px; margin-right: 8px; }

.ribbon { display: flex; height: 85px; border-left: 1px solid #e5e5e5; background: #f1f1f1; box-shadow: inset 1px 0 #888, inset 0 -3px #f1f1f1, inset 0 -4px #dcdcdc; font-family: Roboto, sans-serif; }
.workspace { gap: 7px; width: 111px; height: 62px; margin: 10px 4px 0 12px; border: 2px solid #dedede; border-radius: 4px; font-weight: 700; }
.tabs { display: flex; gap: 19px; height: 24px; padding-left: 12px; }
.tabs a { padding: 4px 12px 0; color: #333; text-decoration: none; white-space: nowrap; }
.tabs .active { margin-right: 5px; border-bottom: 3px solid #0b93dc; color: #0b93dc; }
.tools { display: flex; }
.group { display: flex; flex-direction: column; align-items: center; height: 53px; margin-top: 2px; padding: 0 10px; border-right: 2px solid #dfdfdf; }
.group.single { padding: 0 13px; }
.group.narrow { padding: 0 11px; }
.group.last { border: 0; }
.icons { display: flex; flex: none; gap: 11px; height: 32px; margin-top: 1px; align-items: center; }
.select-tool { width: 38px; height: 38px; background: #0b93dc; }
.menu { flex: none; gap: 4px; height: 20px; margin-top: 3px; white-space: nowrap; }

.viewport { position: relative; flex: 1; min-height: 600px; }
.scene { position: absolute; left: 0; width: 100%; height: 100%; }
.browser { position: absolute; top: 4px; left: 6px; }
.panel-head { display: flex; align-items: center; gap: 10px; width: 300px; height: 25px; padding: 0 10px 0 4px; border: 1px solid #ccc; background: #f1f1f1; color: #666; font-family: Roboto, sans-serif; }
.panel-head span { flex: 1; }
.tree { display: flex; flex-direction: column; gap: 4px; padding-top: 5px; }
.tree li { display: flex; align-items: center; height: 20px; }
.l0 { padding-left: 16px; }
.l1 { padding-left: 34px; }
.l2 { padding-left: 72px; }
.twisty { width: 14px; height: 14px; margin-right: 6px; }
.twisty::before { content: ""; width: 12px; height: 14px; background: #333; clip-path: path(evenodd, "M1 0h2l7 7-7 7H1zM2 1.500v11h1L8.500 7 3 1.500z"); }
.twisty.open::before { width: 12px; height: 12px; background: linear-gradient(135deg, #ddd 35%, #333 85%); border-right: 1px solid #222; border-bottom: 1px solid #222; clip-path: polygon(100% 0, 100% 100%, 0 100%); }
.pill { display: flex; align-items: center; height: 20px; padding: 0 8px 0 3px; background: #f2f2f2; white-space: nowrap; }
.pill.bare { padding-left: 2px; }
.eye { width: 16px; height: 12px; margin-right: 8px; }
.ico { width: 18px; height: 18px; margin-right: 13px; }
.ico:has(+ .near) { margin-right: 9px; }
.ico:has(+ .link) { margin-right: 7px; }
.link { color: #333; }
.root { display: flex; align-items: center; height: 16px; margin-left: -2px; padding: 0 13px 0 2px; background: #999; color: #fff; font-weight: 700; }
.pill input { appearance: none; width: 13px; height: 13px; margin: 0 0 0 4px; border: 1px solid #333; border-radius: 50%; background: radial-gradient(circle, #222 2px, #fff 3px); }
.comments { position: absolute; left: 6px; bottom: 4px; padding-left: 24px; border-top: 0; }
.navbar { position: absolute; left: 50%; bottom: 6px; display: flex; gap: 5px; height: 24px; margin-left: -76px; padding: 0 3px 0 2px; background: #f1f1f1; }
.nav-set { display: flex; align-items: center; gap: 8px; }
.nav-set.tight { gap: 5px; }
.nav-set button { gap: 2px; }
.cube { position: absolute; top: 23px; right: 0; width: 14px; font: 12px/14px "DejaVu Sans", sans-serif; overflow: hidden; }
.cube-face { height: 53px; margin-left: 6px; border: 1px solid #aaa; border-right: 0; background: #eee; }
.axis-y { display: block; margin-left: 7px; color: #9f9; }
.axis-z { display: block; margin-top: -5px; color: #77f; }
.pointer { position: absolute; top: 125px; right: 107px; }

.timeline { display: flex; align-items: flex-start; height: 44px; border-top: 1px solid #ccc; border-left: 1px solid #e5e5e5; background: #f1f1f1; box-shadow: inset 1px 0 #888; }
.playback { display: flex; gap: 13px; padding: 17px 23px 0 12px; }
.playback button { height: 14px; }
.features { display: flex; padding-top: 15px; }
.features li { width: 24px; height: 27px; border-bottom: 2px solid #ccc; }
.features li:first-child { border-image: linear-gradient(90deg, transparent 9px, #ccc 9px) 2; }
.features svg { width: 16px; height: 16px; }
.features li::after { content: ""; display: block; width: 2px; height: 6px; margin: 3px 0 0 8px; background: #ccc; }
.marker { margin-top: 7px; }
```
